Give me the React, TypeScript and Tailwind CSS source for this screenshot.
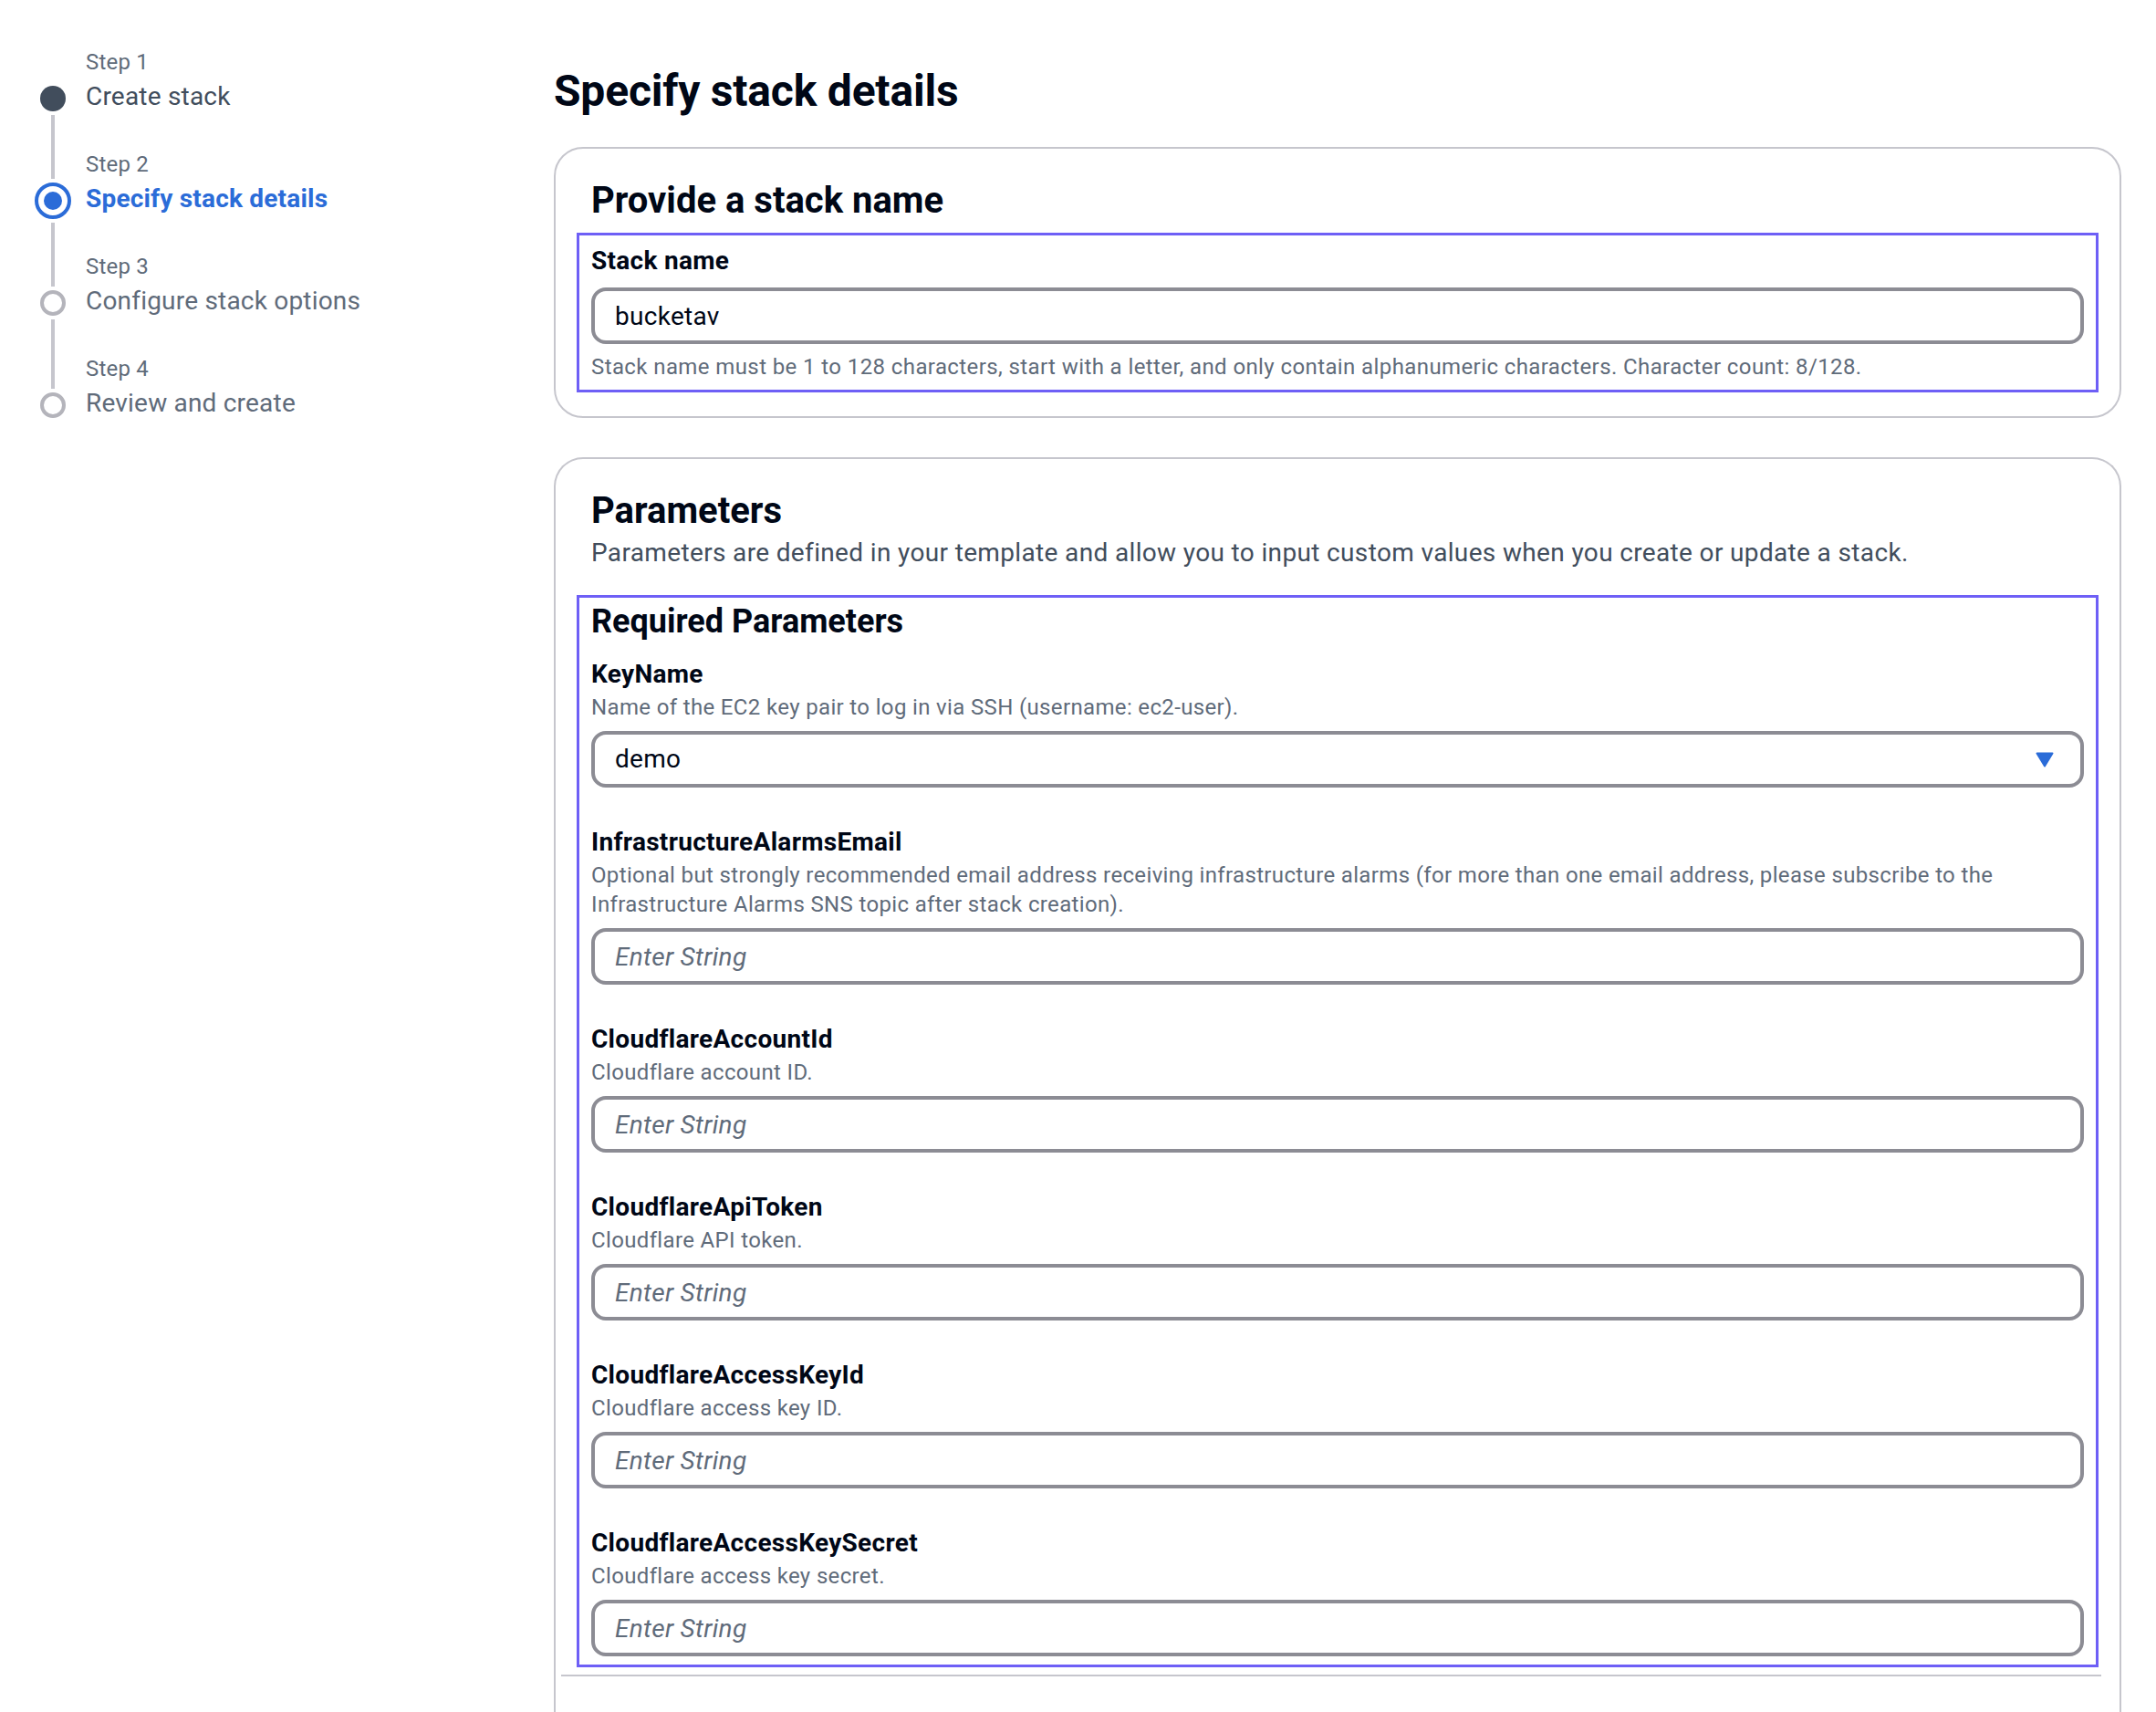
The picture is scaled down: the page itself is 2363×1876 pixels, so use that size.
const steps = [
  { n: 1, title: "Create stack", state: "done" },
  { n: 2, title: "Specify stack details", state: "active" },
  { n: 3, title: "Configure stack options", state: "todo" },
  { n: 4, title: "Review and create", state: "todo" },
];

const fields = [
  {
    name: "InfrastructureAlarmsEmail",
    desc: [
      "Optional but strongly recommended email address receiving infrastructure alarms (for more than one email address, please subscribe to the",
      "Infrastructure Alarms SNS topic after stack creation).",
    ],
  },
  { name: "CloudflareAccountId", desc: ["Cloudflare account ID."] },
  { name: "CloudflareApiToken", desc: ["Cloudflare API token."] },
  { name: "CloudflareAccessKeyId", desc: ["Cloudflare access key ID."] },
  { name: "CloudflareAccessKeySecret", desc: ["Cloudflare access key secret."] },
];

function StepIcon({ state }: { state: string }) {
  if (state === "done") return <div className="h-[28px] w-[28px] rounded-full bg-[#414d5c]" />;
  if (state === "active")
    return (
      <div className="flex h-[40px] w-[40px] items-center justify-center rounded-full border-[4px] border-[#2b6cd8]">
        <div className="h-[20px] w-[20px] rounded-full bg-[#2b6cd8]" />
      </div>
    );
  return <div className="h-[28px] w-[28px] rounded-full border-[4px] border-[#b4b4bb]" />;
}

function Step({ n, title, state, first, last }: { n: number; title: string; state: string; first: boolean; last: boolean }) {
  const active = state === "active";
  return (
    <div className="flex h-[112px]">
      <div className="flex w-[41px] flex-col items-center">
        <div className={`w-[4px] ${active ? "h-[32px]" : "h-[38px]"} ${first ? "" : "bg-[#c6c6cd]"}`} />
        <div className="my-[4px]">
          <StepIcon state={state} />
        </div>
        {!last && <div className="w-[4px] flex-1 bg-[#c6c6cd]" />}
      </div>
      <div className="ml-[16px] tracking-[0.2px]">
        <div className="text-[24px] leading-[32px] text-[#5f6b7a]">Step {n}</div>
        <div
          className={
            active
              ? "text-[28px] leading-[44px] font-bold text-[#2b6cd8]"
              : state === "done"
              ? "text-[28px] leading-[44px] text-[#414d5c]"
              : "text-[28px] leading-[44px] text-[#5f6b7a]"
          }
        >
          {title}
        </div>
      </div>
    </div>
  );
}

function TextInput({ value, placeholder }: { value?: string; placeholder?: string }) {
  return (
    <input
      defaultValue={value}
      placeholder={placeholder}
      className="mt-[10px] block h-[62px] w-full rounded-[16px] border-[4px] border-[#8c8c94] bg-white px-[22px] text-[28px] tracking-[0.3px] text-[#000716] outline-none placeholder:italic placeholder:text-[#5f6b7a]"
    />
  );
}

export default function App() {
  return (
    <div className="flex min-h-screen bg-white font-['Roboto',sans-serif] text-[#000716]">
      <aside className="w-[607px] shrink-0 pl-[37px] pt-[52px]">
        {steps.map((s, i) => (
          <Step key={s.n} {...s} first={i === 0} last={i === steps.length - 1} />
        ))}
      </aside>

      <main className="flex-1 pr-[38px] pt-[72px]">
        <h1 className="mb-[33px] text-[48px] font-bold leading-[56px] tracking-[-0.2px]">Specify stack details</h1>

        <section className="rounded-[32px] border-2 border-[#c6c6cd] px-[39px] pb-[26px] pt-[33px]">
          <h2 className="text-[40px] font-bold leading-[48px]">Provide a stack name</h2>
          <div className="-mx-[16px] mt-[11px] border-[3px] border-[#6e5ff6] px-[13px] pb-[9px] pt-[8px]">
            <div className="text-[28px] font-bold leading-[40px] tracking-[0.3px]">Stack name</div>
            <input
              defaultValue="bucketav"
              className="mt-[9px] block h-[62px] w-full rounded-[16px] border-[4px] border-[#8c8c94] bg-white px-[22px] text-[28px] tracking-[0.3px] text-[#000716] outline-none"
            />
            <div className="mt-[9px] text-[24px] leading-[32px] tracking-[0.4px] text-[#5f6b7a]">
              Stack name must be 1 to 128 characters, start with a letter, and only contain alphanumeric characters. Character count: 8/128.
            </div>
          </div>
        </section>

        <section className="mt-[43px] rounded-t-[32px] border-2 border-b-0 border-[#c6c6cd] px-[39px] pt-[33px]">
          <h2 className="text-[40px] font-bold leading-[48px]">Parameters</h2>
          <p className="text-[28px] leading-[44px] tracking-[0.35px] text-[#414d5c]">
            Parameters are defined in your template and allow you to input custom values when you create or update a stack.
          </p>
          <div className="-mx-[16px] mt-[24px] border-[3px] border-[#6e5ff6] px-[13px] pb-[9px] pt-[2px]">
            <h3 className="text-[36px] font-bold leading-[48px]">Required Parameters</h3>

            <div className="mt-[14px]">
              <div className="text-[28px] font-bold leading-[40px] tracking-[0.3px]">KeyName</div>
              <div className="text-[24px] leading-[32px] tracking-[0.35px] text-[#5f6b7a]">
                Name of the EC2 key pair to log in via SSH (username: ec2-user).
              </div>
              <div className="mt-[10px] flex h-[62px] w-full items-center justify-between rounded-[16px] border-[4px] border-[#8c8c94] pl-[22px] pr-[29px]">
                <span className="text-[28px] tracking-[0.3px] text-[#000716]">demo</span>
                <svg width="20" height="17" viewBox="0 0 20 17">
                  <path d="M1.5 1.5 H18.5 L10 15.5 Z" fill="#2b6cd8" stroke="#2b6cd8" strokeWidth="2" strokeLinejoin="round" />
                </svg>
              </div>
            </div>

            {fields.map((f) => (
              <div key={f.name} className="mt-[40px]">
                <div className="text-[28px] font-bold leading-[40px] tracking-[0.3px]">{f.name}</div>
                <div className="text-[24px] leading-[32px] tracking-[0.35px] text-[#5f6b7a]">
                  {f.desc.map((d, i) => (
                    <div key={i}>{d}</div>
                  ))}
                </div>
                <TextInput placeholder="Enter String" />
              </div>
            ))}
          </div>
          <div className="-ml-[33px] -mr-[19px] mt-[8px] h-[2px] bg-[#c6c6cd]" />
          <div className="h-[120px]" />
        </section>
      </main>
    </div>
  );
}
